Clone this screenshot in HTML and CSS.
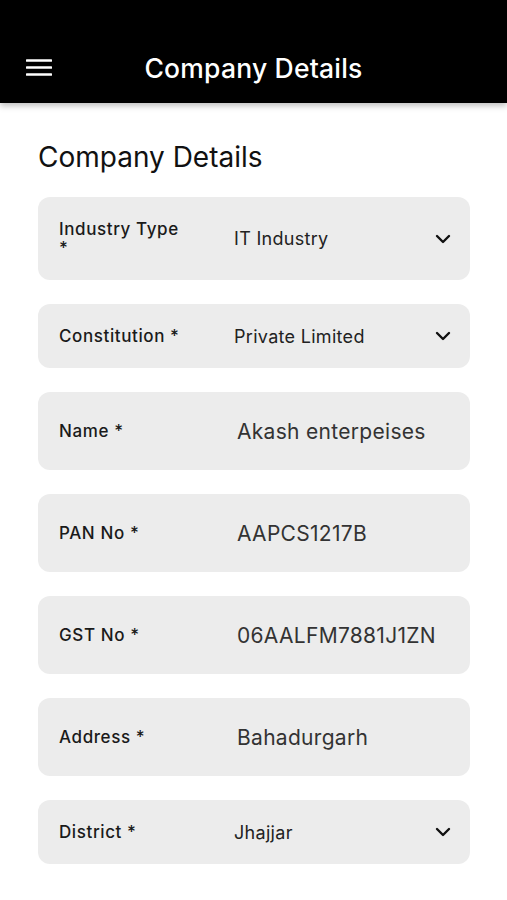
FILE: index.html
```html
<!DOCTYPE html>
<html lang="en">
<head>
  <meta charset="UTF-8">
  <title>Company Details</title>
  <meta name="viewport" content="width=device-width, initial-scale=1.0">
  <link rel="stylesheet" href="styles.css">
</head>
<body>
  <header class="topbar">
    <button class="menu-btn" aria-label="Menu">
      <svg width="26" height="18" viewBox="0 0 26 18"><path d="M1 1.5h24M1 8.5h24M1 15.5h24" stroke="#fff" stroke-width="2.6" stroke-linecap="round"/></svg>
    </button>
    <div class="topbar-title">Company Details</div>
    <span></span>
  </header>

  <main class="content">
    <h2 class="section-title">Company Details</h2>
    <div class="form">
      <div class="field select">
        <label class="field-label">Industry Type *</label>
        <div class="field-value">IT Industry</div>
        <svg class="chevron" width="16" height="10" viewBox="0 0 16 10"><path d="M2 2l6 6 6-6" fill="none" stroke="#111" stroke-width="2.4" stroke-linecap="round" stroke-linejoin="round"/></svg>
      </div>
      <div class="field select">
        <label class="field-label">Constitution *</label>
        <div class="field-value">Private Limited</div>
        <svg class="chevron" width="16" height="10" viewBox="0 0 16 10"><path d="M2 2l6 6 6-6" fill="none" stroke="#111" stroke-width="2.4" stroke-linecap="round" stroke-linejoin="round"/></svg>
      </div>
      <div class="field text">
        <label class="field-label">Name *</label>
        <div class="field-value">Akash enterpeises</div>
      </div>
      <div class="field text">
        <label class="field-label">PAN No *</label>
        <div class="field-value">AAPCS1217B</div>
      </div>
      <div class="field text">
        <label class="field-label">GST No *</label>
        <div class="field-value">06AALFM7881J1ZN</div>
      </div>
      <div class="field text">
        <label class="field-label">Address *</label>
        <div class="field-value">Bahadurgarh</div>
      </div>
      <div class="field select">
        <label class="field-label">District *</label>
        <div class="field-value">Jhajjar</div>
        <svg class="chevron" width="16" height="10" viewBox="0 0 16 10"><path d="M2 2l6 6 6-6" fill="none" stroke="#111" stroke-width="2.4" stroke-linecap="round" stroke-linejoin="round"/></svg>
      </div>
    </div>
  </main>
</body>
</html>
```

FILE: styles.css
```css
body { margin: 0; font-family: Inter, "Noto Sans", sans-serif; background: #fff; color: #1a1a1a; }

.topbar {
  height: 103px; box-sizing: border-box; padding: 33px 26px 0;
  background: #000; color: #fff;
  display: grid; grid-template-columns: 1fr auto 1fr; align-items: center;
  box-shadow: 0 3px 6px rgba(0, 0, 0, 0.25);
}
.topbar > * { height: 40px; display: flex; align-items: center; }
.menu-btn { background: none; border: 0; padding: 0; cursor: pointer; }
.topbar-title { font-size: 26.5px; font-weight: 500; letter-spacing: 0.2px; }

.content { padding: 0 37px 0 38px; }
.section-title { font-size: 28px; font-weight: 400; line-height: 32px; margin: 38px 0 24px; color: #111; }

.form { display: flex; flex-direction: column; gap: 24px; }
.field {
  display: flex; align-items: center;
  background: #ececec; border-radius: 12px;
  padding: 22.5px 19px 22.5px 21px; box-sizing: border-box;
}
.field.text { min-height: 78px; }
.field-label {
  flex: 0 0 175px; box-sizing: border-box; padding-right: 49px;
  font-size: 17px; font-weight: 500; line-height: 19px; letter-spacing: 0.6px; color: #1a1a1a;
}
.field-value { flex: 1; font-size: 18px; line-height: 19px; letter-spacing: 0.3px; color: #222; }
.field.text .field-value { font-size: 21px; letter-spacing: 0.3px; padding-left: 3px; color: #333; }
.chevron { flex: none; }
```
